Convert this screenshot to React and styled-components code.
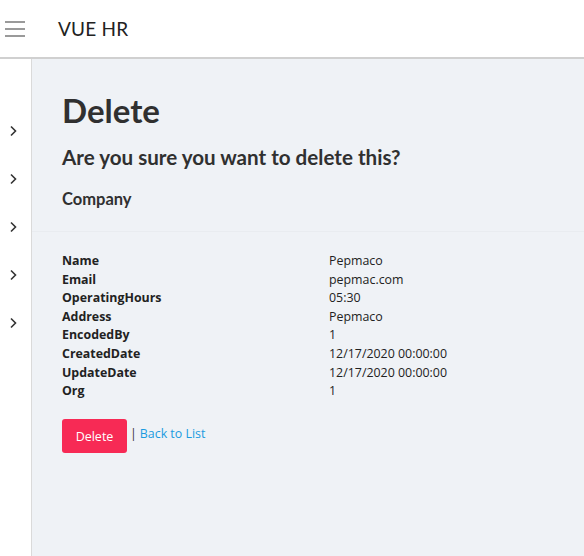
import React from 'react'
import styled, { createGlobalStyle } from 'styled-components'

const Global = createGlobalStyle`
  html, body { margin: 0; padding: 0; }
  body {
    font-family: Lato, "Open Sans", sans-serif;
    color: #333;
    background: #fff;
  }
`

const Shell = styled.div`
  display: flex;
  flex-direction: column;
  height: 556px;
`

const TopBar = styled.header`
  display: flex;
  align-items: center;
  height: 57px;
  border-bottom: 2px solid #d0d0d0;
  background: #fff;
  flex-shrink: 0;
`

const Burger = styled.button`
  display: flex;
  flex-direction: column;
  gap: 5px;
  width: 20px;
  padding: 0;
  margin: 0 33px 0 5px;
  border: none;
  background: none;
  span {
    display: block;
    height: 2px;
    background: #9a9a9a;
  }
`

const Brand = styled.div`
  font-size: 19px;
  color: #222;
  letter-spacing: 0.2px;
`

const Body = styled.div`
  display: flex;
  flex: 1;
  min-height: 0;
`

const Side = styled.nav`
  width: 31px;
  border-right: 1px solid #dadada;
  background: #fff;
  display: flex;
  flex-direction: column;
  gap: 30px;
  padding-top: 63px;
  flex-shrink: 0;
`

const NavItem = styled.div`
  height: 18px;
  display: flex;
  align-items: center;
  padding-left: 9px;
  color: #333;
`

const Main = styled.main`
  flex: 1;
  background: #eff2f6;
  padding: 0 30px;
`

const Heading = styled.section`
  padding-top: 32px;
  padding-bottom: 21px;
  border-bottom: 1px solid #e9ecf0;
  margin: 0 -30px;
  padding-left: 30px;
`

const Title = styled.h1`
  margin: 0;
  font-size: 33px;
  font-weight: 700;
  line-height: 38px;
  color: #303030;
`

const Question = styled.h3`
  margin: 14px 0 0;
  font-size: 20.6px;
  font-weight: 700;
  line-height: 28px;
  color: #303030;
`

const Entity = styled.h4`
  margin: 17px 0 0;
  font-size: 16.5px;
  font-weight: 700;
  line-height: 22px;
  color: #303030;
`

const Details = styled.dl`
  display: grid;
  grid-template-columns: 267px 1fr;
  margin: 20px 0 0;
  font-family: "Open Sans", sans-serif;
  font-size: 12.4px;
  line-height: 18.6px;
  color: #222;
`

const Term = styled.dt`
  font-weight: 700;
`

const Value = styled.dd`
  margin: 0;
`

const Actions = styled.div`
  display: flex;
  align-items: flex-start;
  gap: 3px;
  margin-top: 18px;
  font-family: "Open Sans", sans-serif;
  font-size: 12.4px;
`

const DangerButton = styled.button`
  width: 65px;
  height: 34px;
  border: none;
  border-radius: 3px;
  background: #f72a55;
  color: #fff;
  font-family: "Open Sans", sans-serif;
  font-size: 12.5px;
  padding: 2px 0 0;
`

const Sep = styled.span`
  color: #333;
  line-height: 17px;
  margin-top: 6px;
`

const BackLink = styled.a`
  color: #1a9be0;
  text-decoration: none;
  line-height: 17px;
  margin-top: 6px;
`

const Chevron = () => (
  <svg width="9" height="12" viewBox="0 0 9 12">
    <path d="M2 1.5 L6.5 6 L2 10.5" fill="none" stroke="#333" strokeWidth="1.6" />
  </svg>
)

const rows = [
  ['Name', 'Pepmaco'],
  ['Email', 'pepmac.com'],
  ['OperatingHours', '05:30'],
  ['Address', 'Pepmaco'],
  ['EncodedBy', '1'],
  ['CreatedDate', '12/17/2020 00:00:00'],
  ['UpdateDate', '12/17/2020 00:00:00'],
  ['Org', '1'],
]

export default function App() {
  return (
    <Shell>
      <Global />
      <TopBar>
        <Burger aria-label="menu">
          <span />
          <span />
          <span />
        </Burger>
        <Brand>VUE HR</Brand>
      </TopBar>
      <Body>
        <Side>
          {[0, 1, 2, 3, 4].map(i => (
            <NavItem key={i}>
              <Chevron />
            </NavItem>
          ))}
        </Side>
        <Main>
          <Heading>
            <Title>Delete</Title>
            <Question>Are you sure you want to delete this?</Question>
            <Entity>Company</Entity>
          </Heading>
          <Details>
            {rows.map(([k, v]) => (
              <React.Fragment key={k}>
                <Term>{k}</Term>
                <Value>{v}</Value>
              </React.Fragment>
            ))}
          </Details>
          <Actions>
            <DangerButton>Delete</DangerButton>
            <Sep>|</Sep>
            <BackLink href="#">Back to List</BackLink>
          </Actions>
        </Main>
      </Body>
    </Shell>
  )
}
